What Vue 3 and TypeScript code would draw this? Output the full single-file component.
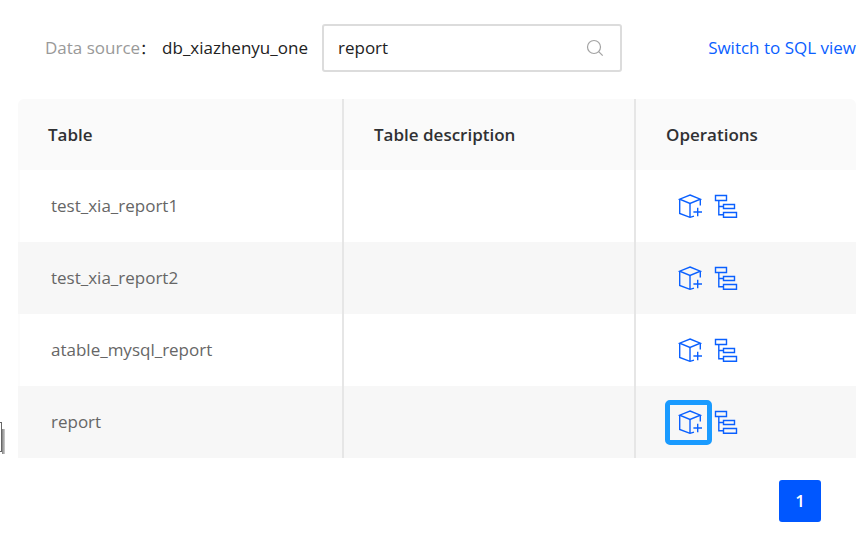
<script setup lang="ts">
import { ref } from 'vue'

interface TableRow {
  name: string
  description: string
}

const dataSource = 'db_xiazhenyu_one'
const keyword = ref('report')
const selected = ref('report')
const rows: TableRow[] = [
  { name: 'test_xia_report1', description: '' },
  { name: 'test_xia_report2', description: '' },
  { name: 'atable_mysql_report', description: '' },
  { name: 'report', description: '' },
]
</script>

<template>
  <main class="page">
    <header class="toolbar">
      <label class="source" for="keyword">
        <span class="source-label">Data source</span><span class="colon">：</span><span>{{ dataSource }}</span>
      </label>
      <div class="search">
        <input id="keyword" v-model="keyword" type="text" />
        <svg class="search-icon" viewBox="0 0 18 18" aria-hidden="true">
          <circle cx="8" cy="8" r="6.5" />
          <path d="M12.7 12.7 16.7 16.7" />
        </svg>
      </div>
      <a class="switch" href="#">Switch to SQL view</a>
    </header>

    <table class="grid">
      <thead>
        <tr>
          <th class="col-name">Table</th>
          <th class="col-description">Table description</th>
          <th>Operations</th>
        </tr>
      </thead>
      <tbody>
        <tr v-for="row in rows" :key="row.name">
          <td>{{ row.name }}</td>
          <td>{{ row.description }}</td>
          <td class="operations">
            <div class="actions">
              <button
                type="button"
                class="action cube"
                :class="{ selected: row.name === selected }"
                aria-label="Create model"
                @click="selected = row.name"
              >
                <svg viewBox="0 0 26 24" aria-hidden="true">
                  <path d="M13 1 23.3 5.2 13 9.4 2.7 5.2Z" />
                  <path d="M2.7 5.2V19.5L13 23.3L17 22.2M13 9.4V23.3M23.3 5.2V11.5" />
                  <path d="M20.7 13.7V22.3M16.4 18H25" />
                </svg>
              </button>
              <button type="button" class="action tree" aria-label="Show structure">
                <svg viewBox="0 0 24 24" aria-hidden="true">
                  <path d="M1.5 1.5H12.5V6.5H1.5ZM9.5 10.5H20.5V14.5H9.5ZM9.5 18.5H22.5V23.2H9.5Z" />
                  <path d="M4.8 6.5V20.8H9.5M4.8 12.5H9.5" />
                </svg>
              </button>
            </div>
          </td>
        </tr>
      </tbody>
    </table>

    <nav class="pagination">
      <button type="button" class="page-number">1</button>
    </nav>

    <div class="edge-panel"></div>
  </main>
</template>

<style>
body {
  margin: 0;
  background: #fff;
}
</style>

<style scoped>
.page {
  position: relative;
  padding: 24px 10px 11px 18px;
  font-family: "Open Sans", "Noto Sans", "Noto Sans CJK SC", sans-serif;
  font-size: 17px;
  line-height: 24px;
  color: #222;
}

.toolbar {
  display: flex;
  align-items: center;
  margin-bottom: 27px;
  padding-left: 27px;
}

.source {
  display: flex;
  width: 277px;
  white-space: nowrap;
}

.source-label {
  color: #999;
}

.colon {
  width: 22px;
  font-family: "Noto Sans CJK SC", sans-serif;
  font-size: 15px;
}

.search {
  display: flex;
  align-items: center;
  box-sizing: border-box;
  width: 300px;
  height: 48px;
  padding: 0 16px 0 14px;
  border: 2px solid #dcdcdc;
  border-radius: 3px;
}

.search input {
  flex: 1;
  min-width: 0;
  padding: 0;
  border: 0;
  outline: 0;
  background: transparent;
  color: #222;
  font: inherit;
}

.search-icon {
  width: 18px;
  height: 18px;
  fill: none;
  stroke: #a3a3a3;
  stroke-width: 1.2;
}

.switch {
  margin-left: auto;
  color: #0a60ff;
  text-decoration: none;
  white-space: nowrap;
}

.grid {
  width: 100%;
  table-layout: fixed;
  border-collapse: separate;
  border-spacing: 0;
  border-radius: 6px 6px 0 0;
  overflow: hidden;
}

th,
td {
  box-sizing: border-box;
  padding: 0 30px;
  text-align: left;
}

th {
  height: 71px;
  background: #fafafa;
  color: #303133;
  font-weight: 600;
}

td {
  height: 72px;
  color: #666;
}

th:not(:last-child),
td:not(:last-child) {
  border-right: 2px solid #e6e6e6;
}

td:first-child {
  padding-left: 31px;
  border-left: 2px solid #fcfcfc;
}

tbody tr:nth-child(even) {
  background: #f7f7f7;
}

tbody tr:nth-child(even) td:first-child {
  border-left-color: #f7f7f7;
}

.col-name {
  width: 326px;
}

.col-description {
  width: 292px;
}

td.operations {
  padding-left: 29px;
}

.actions {
  display: flex;
  align-items: center;
}

.action {
  display: flex;
  align-items: center;
  justify-content: center;
  box-sizing: border-box;
  height: 45px;
  padding: 0;
  border: 0;
  background: transparent;
  cursor: pointer;
}

.action svg {
  width: 24px;
  height: 24px;
  fill: none;
  stroke: #0a60ff;
  stroke-width: 1.4;
}

.cube {
  width: 47px;
  padding-left: 2px;
  border: 5px solid transparent;
  border-radius: 5px;
}

.action.cube svg {
  width: 26px;
}

.cube.selected {
  border-color: #1a9bff;
}

.tree {
  width: 28px;
}

.pagination {
  display: flex;
  justify-content: flex-end;
  padding: 22px 35px 0 0;
}

.page-number {
  width: 42px;
  height: 42px;
  padding: 0;
  border: 0;
  border-radius: 3px;
  background: #0057ff;
  color: #fff;
  font: inherit;
  font-weight: 600;
}

.edge-panel {
  position: absolute;
  top: 422px;
  left: 0;
  box-sizing: border-box;
  width: 2px;
  height: 30px;
  border: solid #666;
  border-width: 1px 1px 1px 0;
}

.edge-panel::after {
  content: "";
  position: absolute;
  top: 6px;
  bottom: -3px;
  left: 2px;
  width: 3px;
  background: linear-gradient(90deg, #808080, #d0d0d0);
}
</style>
